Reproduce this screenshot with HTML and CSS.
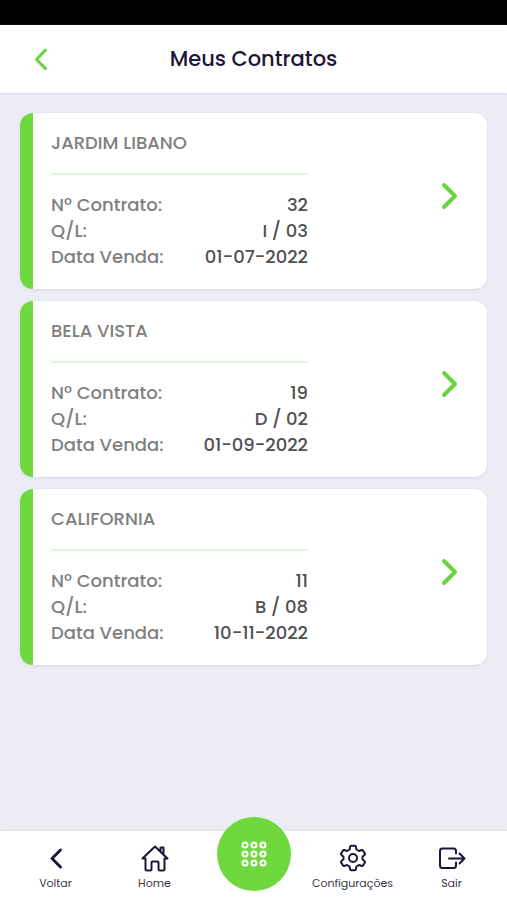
FILE: index.html
```html
<!DOCTYPE html>
<html lang="pt-BR">
<head>
<meta charset="utf-8">
<meta name="viewport" content="width=device-width, initial-scale=1">
<title>Meus Contratos</title>
<link rel="stylesheet" href="styles.css">
</head>
<body>
<div class="status-bar"></div>
<header class="header">
  <button class="back" type="button" aria-label="Voltar">
    <svg width="14" height="24" viewBox="0 0 14 24"><path d="M11.5 3 2.5 12.5l9 9"/></svg>
  </button>
  <h1 class="title">Meus Contratos</h1>
</header>
<main class="contracts">
  <a class="card" href="#libano">
    <div class="details">
      <h2 class="name">JARDIM LIBANO</h2>
      <dl class="facts">
        <div class="fact"><dt>Nº Contrato:</dt><dd>32</dd></div>
        <div class="fact"><dt>Q/L:</dt><dd>I / 03</dd></div>
        <div class="fact"><dt>Data Venda:</dt><dd>01-07-2022</dd></div>
      </dl>
    </div>
    <svg class="arrow" width="18" height="28" viewBox="0 0 18 28"><path d="m4 3 11 11-11 11"/></svg>
  </a>
  <a class="card" href="#vista">
    <div class="details">
      <h2 class="name">BELA VISTA</h2>
      <dl class="facts">
        <div class="fact"><dt>Nº Contrato:</dt><dd>19</dd></div>
        <div class="fact"><dt>Q/L:</dt><dd>D / 02</dd></div>
        <div class="fact"><dt>Data Venda:</dt><dd>01-09-2022</dd></div>
      </dl>
    </div>
    <svg class="arrow" width="18" height="28" viewBox="0 0 18 28"><path d="m4 3 11 11-11 11"/></svg>
  </a>
  <a class="card" href="#california">
    <div class="details">
      <h2 class="name">CALIFORNIA</h2>
      <dl class="facts">
        <div class="fact"><dt>Nº Contrato:</dt><dd>11</dd></div>
        <div class="fact"><dt>Q/L:</dt><dd>B / 08</dd></div>
        <div class="fact"><dt>Data Venda:</dt><dd>10-11-2022</dd></div>
      </dl>
    </div>
    <svg class="arrow" width="18" height="28" viewBox="0 0 18 28"><path d="m4 3 11 11-11 11"/></svg>
  </a>
</main>
<nav class="tabs">
  <a class="tab" href="#voltar">
    <svg class="icon bold" width="28" height="28" viewBox="0 0 28 28"><path d="m18.500 6-8.500 8.500 8.500 8.500"/></svg>
    <span>Voltar</span>
  </a>
  <a class="tab" href="#home">
    <svg class="icon" width="28" height="28" viewBox="0 0 28 28"><path d="M4 14.500H1.500L14 2.500l12.500 12H24M4.500 14.500V25q0 1.500 1.500 1.500h3q1.500 0 1.500-1.500v-6.500q0-1 1-1h5q1 0 1 1V25q0 1.500 1.500 1.500h3q1.500 0 1.500-1.500V14.500M19.500 7V3.500h3V10"/></svg>
    <span>Home</span>
  </a>
  <button class="menu" type="button" aria-label="Menu">
    <svg width="26" height="26" viewBox="0 0 26 26"><g><circle cx="4" cy="4" r="2.500"/><circle cx="13" cy="4" r="2.500"/><circle cx="22" cy="4" r="2.500"/><circle cx="4" cy="13" r="2.500"/><circle cx="13" cy="13" r="2.500"/><circle cx="22" cy="13" r="2.500"/><circle cx="4" cy="22" r="2.500"/><circle cx="13" cy="22" r="2.500"/><circle cx="22" cy="22" r="2.500"/></g></svg>
  </button>
  <a class="tab" href="#configuracoes">
    <svg class="icon" width="28" height="28" viewBox="0 0 28 28"><path d="M12 1.800h4q.8 0 .9.800l.5 2.900 2.600 1.500 2.800-1q.8-.3 1.200.4l1.900 3.200q.4.700-.2 1.200l-2.200 1.900v2.600l2.200 1.900q.6.500.2 1.200L24 21.600q-.4.700-1.200.4l-2.800-1-2.600 1.500-.5 2.900q-.1.800-.9.800h-4q-.8 0-.9-.8l-.5-2.900L8 21l-2.800 1q-.8.300-1.200-.4l-1.900-3.200q-.4-.7.200-1.200l2.200-1.900v-2.600l-2.200-1.900q-.6-.5-.2-1.200L4 6.400q.4-.7 1.200-.4L8 7l2.600-1.500.5-2.900q.1-.8.9-.8z"/><circle cx="14" cy="14" r="4"/></svg>
    <span>Configurações</span>
  </a>
  <a class="tab" href="#sair">
    <svg class="icon" width="28" height="28" viewBox="0 0 28 28"><path d="M18 9.500V7q0-2.500-2.500-2.500H4.500Q2 4.500 2 7v14.500Q2 24 4.500 24h11q2.500 0 2.500-2.500v-3M11 14.500h15.500M21.500 9.500l5 5-5 5"/></svg>
    <span>Sair</span>
  </a>
</nav>
</body>
</html>
```

FILE: styles.css
```css
* {
  box-sizing: border-box;
}

body {
  margin: 0;
  min-height: 100vh;
  display: flex;
  flex-direction: column;
  background: #ebecf4;
  color: #1d1638;
  font-family: Poppins, Inter, "Liberation Sans", sans-serif;
}

h1,
h2,
dl,
dd {
  margin: 0;
}

button {
  padding: 0;
  border: 0;
  background: none;
}

a {
  color: inherit;
  text-decoration: none;
}

svg {
  display: block;
  fill: none;
  stroke: currentColor;
  stroke-linecap: round;
  stroke-linejoin: round;
}

.status-bar {
  height: 25px;
  background: #000;
}

.header {
  display: grid;
  grid-template-columns: 1fr auto 1fr;
  align-items: center;
  height: 68px;
  padding: 0 34px;
  background: #fff;
  box-shadow: 0 1px 2px #d8d8de;
}

.back {
  justify-self: start;
  color: #68d43f;
  stroke-width: 3;
}

.title {
  font-size: 21px;
  font-weight: 500;
  line-height: 32px;
}

.contracts {
  flex: 1;
  display: flex;
  flex-direction: column;
  gap: 12px;
  padding: 20px;
}

.card {
  display: flex;
  align-items: center;
  justify-content: space-between;
  padding: 17px 29px 19px 18px;
  border-left: 13px solid #6fd83f;
  border-radius: 13px;
  background: linear-gradient(#fff, #fff) padding-box;
  box-shadow: 0 1px 3px #d6d6de;
}

.details {
  width: 66%;
  max-width: 257px;
  flex: 1 0 auto;
}

.name {
  padding-bottom: 17px;
  border-bottom: 2px solid #e2f7da;
  color: #808080;
  font-size: 18px;
  font-weight: 500;
  line-height: 26px;
}

.facts {
  padding-top: 17px;
  font-size: 18px;
  font-weight: 500;
  line-height: 26px;
}

.fact {
  display: flex;
  justify-content: space-between;
}

dt {
  color: #808080;
}

dd {
  color: #505050;
}

.arrow {
  margin-bottom: 8px;
  color: #68d43f;
  stroke-width: 4;
}

.tabs {
  display: grid;
  grid-template-columns: repeat(5, 1fr);
  height: 69px;
  padding: 0 6px;
  background: #fff;
  box-shadow: 0 -1px 2px #dedee4;
}

.tab {
  display: flex;
  flex-direction: column;
  align-items: center;
  gap: 3px;
  padding-top: 13px;
  font-size: 11px;
  line-height: 16px;
}

.tab span {
  color: #3a3846;
}

.icon {
  stroke-width: 2;
}

.bold {
  stroke-width: 3;
}

.menu {
  display: grid;
  place-items: center;
  justify-self: center;
  width: 74px;
  height: 74px;
  margin-top: -14px;
  border-radius: 50%;
  background: #6fd83f;
  color: #fff;
  stroke-width: 2;
}
```
